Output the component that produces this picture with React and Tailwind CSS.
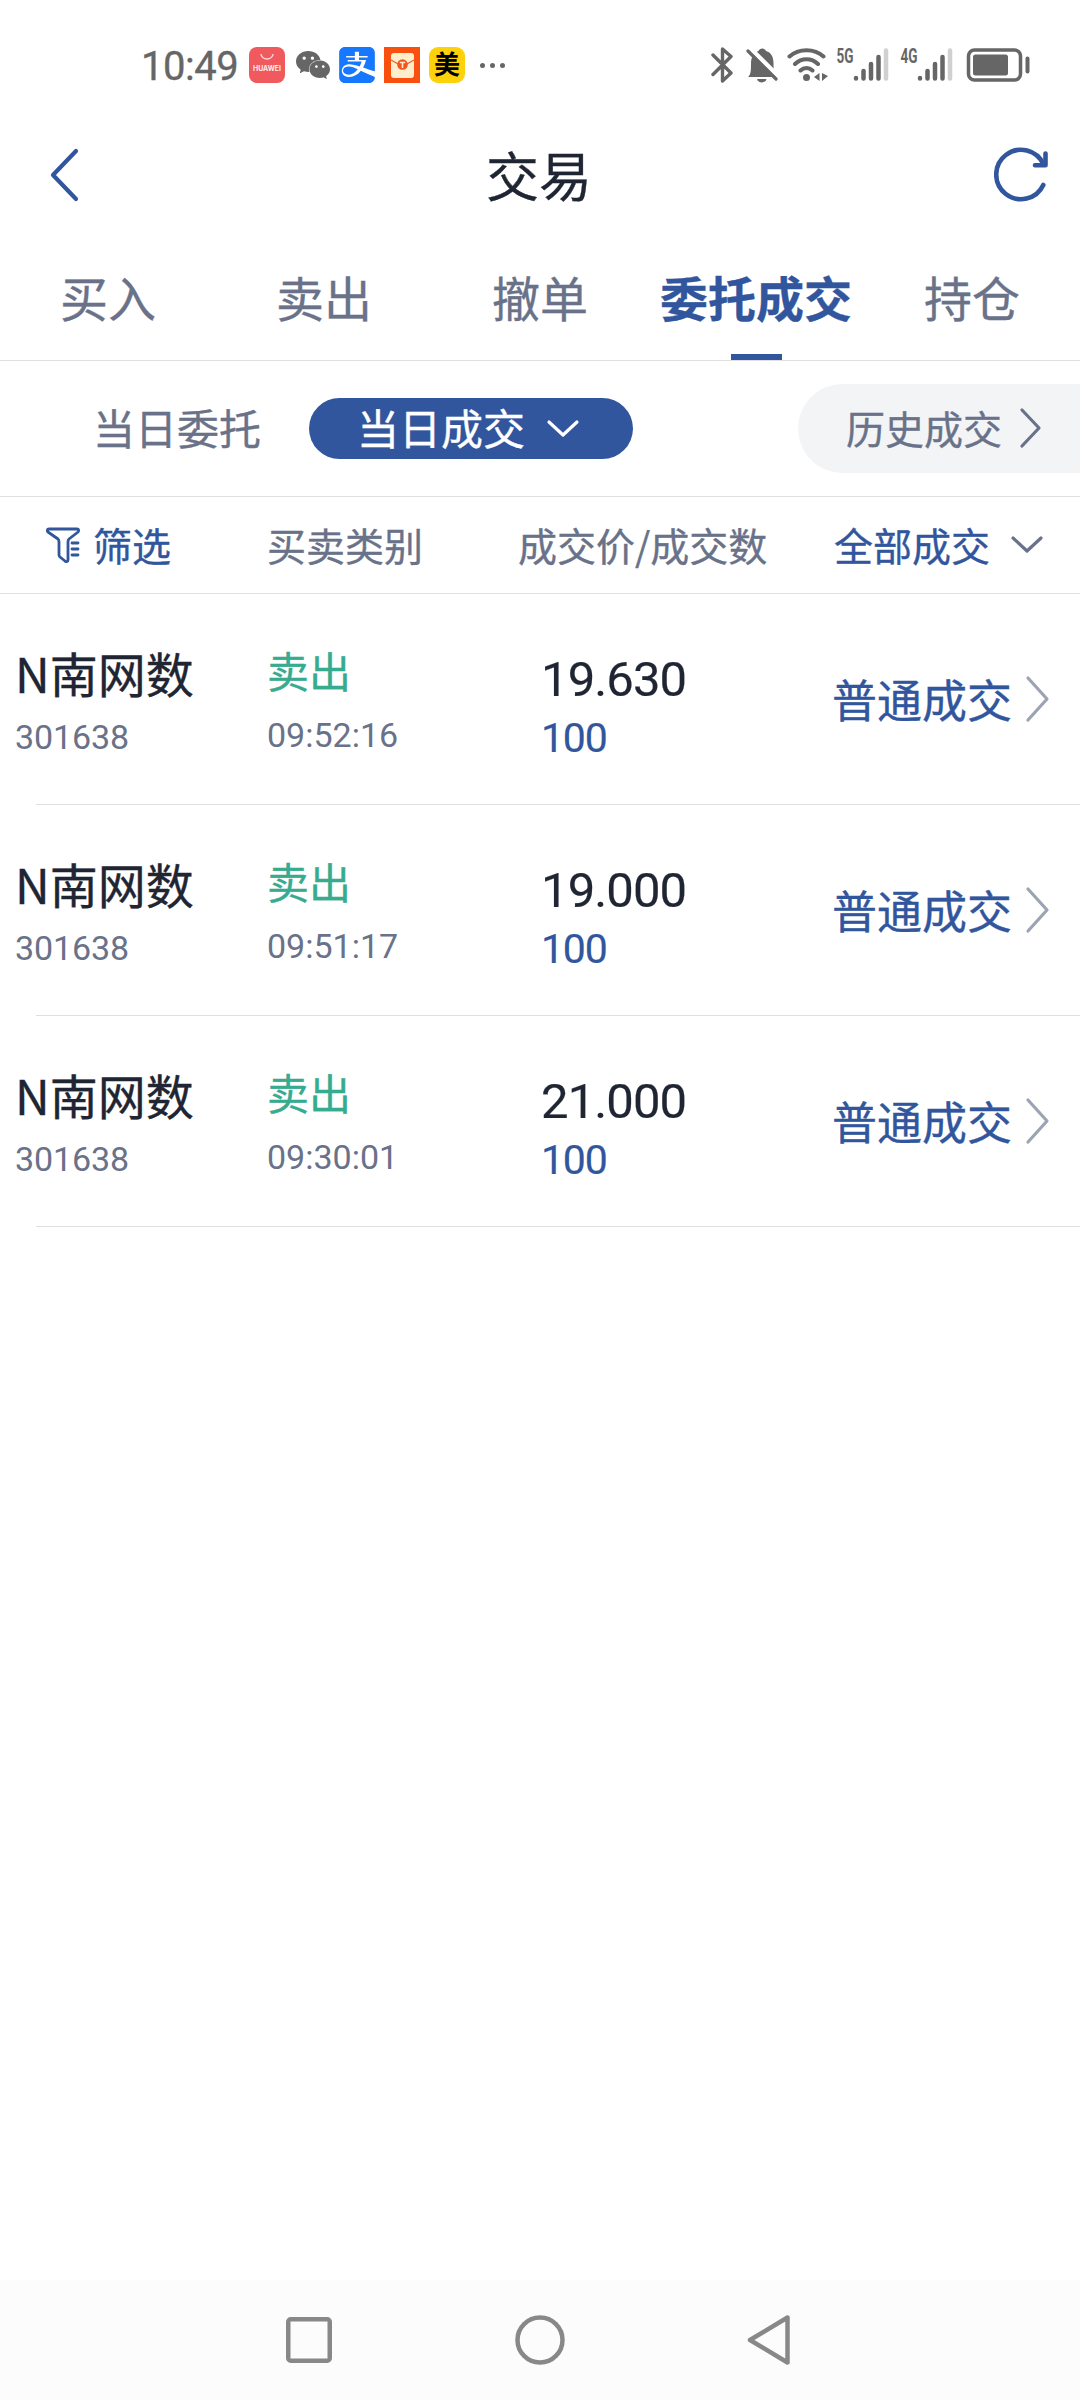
import { SiAlipay, SiWechat } from "react-icons/si";

const Chevron = ({ d, w, h, sw = 3.2, className }) => (
  <svg width={w} height={h} viewBox={`0 0 ${w} ${h}`} fill="none" stroke="currentColor" strokeWidth={sw} className={className}>
    <path d={d} strokeLinecap="round" strokeLinejoin="round" />
  </svg>
);

function AppIcons() {
  return (
    <div className="flex items-center [-webkit-text-stroke:0px]">
      <svg width="36" height="36" viewBox="0 0 36 36">
        <rect width="36" height="36" rx="8" fill="#f0595d" />
        <path d="M12 7a6 5 0 0 0 12 0" fill="none" stroke="#fbd5d3" strokeWidth="1.4" />
        <text x="4" y="24" textLength="28" lengthAdjust="spacingAndGlyphs" fontSize="7" fontWeight="700" fill="#fdeeec" fontFamily="Inter">HUAWEI</text>
      </svg>
      <SiWechat size={34} color="#666" className="ml-[11px]" />
      <SiAlipay size={36} color="#1677ff" className="ml-[9px]" />
      <svg width="36" height="36" viewBox="0 0 36 36" className="ml-[9px]">
        <rect width="36" height="36" fill="#f9500f" />
        <rect x="7" y="6" width="23" height="25" rx="3" fill="#ffeecb" />
        <path d="M7 13l8 4.500M30 13l-8 4.500" stroke="#e8622a" strokeWidth="1.300" />
        <circle cx="18.500" cy="17.500" r="5.300" fill="#f0561d" />
        <path d="M15.800 15.500h5.400M18.500 15.500v5.500" stroke="#ffeecb" strokeWidth="1.600" />
      </svg>
      <div className="ml-[9px] flex h-9 w-9 items-center justify-center rounded-[9px] bg-[#fdd20a] text-[26px] font-bold leading-none text-black">
        <span className="relative -top-[2px]">美</span>
      </div>
      <div className="ml-[15px] flex gap-[5px]">
        <i className="h-[5px] w-[5px] rounded-full bg-[#666]" />
        <i className="h-[5px] w-[5px] rounded-full bg-[#666]" />
        <i className="h-[5px] w-[5px] rounded-full bg-[#666]" />
      </div>
    </div>
  );
}

const Signal = ({ label }) => (
  <svg width="54" height="50" viewBox="0 -7 54 50" className="[-webkit-text-stroke:0px]">
    <text x="0.5" y="15.500" fontSize="20" fontWeight="700" textLength="17" lengthAdjust="spacingAndGlyphs" fill="#666" fontFamily="Roboto">{label}</text>
    <g stroke="#666" strokeWidth="4.500" strokeLinecap="round">
      <path d="M20 31v.5M27.500 24v7.500M35 17v14.500M42.500 10v21.500" />
      <path d="M50 3.500v28" stroke="#d0d0d0" />
    </g>
  </svg>
);

function StatusBar() {
  return (
    <div className="flex h-[130px] items-center justify-between pl-[141px] pr-[50px] text-[#666]">
      <div className="flex items-center">
        <span className='relative top-[2px] w-[108px] whitespace-nowrap font-[Roboto,sans-serif] text-[40px] leading-none tracking-[-0.5px]'>10:49</span>
        <AppIcons />
      </div>
      <div className="flex items-center">
        <svg width="24" height="36" viewBox="0 0 24 36" fill="none" stroke="#666" strokeWidth="3.400" strokeLinecap="round" strokeLinejoin="round">
          <path d="M3 8l18 18-8.500 8V2l8.500 7.500L3 27.500" />
        </svg>
        <svg width="33" height="36" viewBox="0 0 33 36" className="ml-3">
          <path d="M2 30c2.500-2 3-5 3-13C5 9.500 8 5.500 12.500 4c1-3.500 6.500-3.500 7.500 0 5 1.500 7.500 5.500 7.500 12.500 0 8 .5 11.500 2.500 13.500z" fill="#666" />
          <path d="M11 32h9.500c-1 4.500-8.500 4.500-9.500 0z" fill="#666" />
          <path d="M5 2l28 28" stroke="#fff" strokeWidth="4.500" />
          <path d="M2 4l28 28" stroke="#666" strokeWidth="3.200" strokeLinecap="round" />
        </svg>
        <svg width="42" height="36" viewBox="0 0 42 36" className="ml-2" fill="none" stroke="#666" strokeWidth="4" strokeLinecap="round">
          <path d="M2.500 9.500c9-8.500 25-8.500 34 0M8 17c6.500-6.500 16.500-6.500 23 0M13.500 23.500c3.500-3.500 8.500-3.500 12 0" />
          <circle cx="19.500" cy="30.500" r="3.500" fill="#666" stroke="none" />
          <path d="M32.500 26v8L27 30zM35 26v8l6-5z" fill="#666" stroke="none" />
        </svg>
        <div className="ml-[7px]"><Signal label="5G" /></div>
        <div className="ml-[10px]"><Signal label="4G" /></div>
        <svg width="64" height="34" viewBox="0 0 64 34" className="ml-3">
          <rect x="2.500" y="2" width="52" height="30" rx="6" fill="none" stroke="#666" strokeWidth="3.500" />
          <rect x="7" y="6.500" width="35" height="21" rx="2.500" fill="#666" />
          <path d="M61.500 10.500v13" stroke="#666" strokeWidth="4" strokeLinecap="round" />
        </svg>
      </div>
    </div>
  );
}

const tabs = ["买入", "卖出", "撤单", "委托成交", "持仓"];
const trades = [
  { time: "09:52:16", price: "19.630" },
  { time: "09:51:17", price: "19.000" },
  { time: "09:30:01", price: "21.000" },
];

function TradeRow({ time, price }) {
  return (
    <div className="h-[211px]">
      <div className="flex h-[210px] leading-none">
        <div className="w-[251px] pl-[15px] pt-[54px]">
          <div className="whitespace-nowrap text-[48px] text-[#1f2533]">N南网数</div>
          <div className="mt-6 font-[Roboto,sans-serif] text-[34px] tracking-[-0.1px] text-[#697289] [-webkit-text-stroke:0px]">301638</div>
        </div>
        <div className="w-[290px] pl-4 pt-[55px]">
          <div className="text-[42px] text-[#37ab90]">卖出</div>
          <div className="mt-[27px] font-[Roboto,sans-serif] text-[34px] text-[#697289] [-webkit-text-stroke:0px]">{time}</div>
        </div>
        <div className="w-[291px] pt-[61px] font-[Roboto,sans-serif] [-webkit-text-stroke:0.2px]">
          <div className="text-[49px] tracking-[-0.9px] text-[#1f2533]">{price}</div>
          <div className="mt-[14px] text-[41px] tracking-[-1.2px] text-[#31569d]">100</div>
        </div>
        <div className="flex flex-1 items-center text-[#31569d]">
          <span className="relative -top-px text-[45px]">普通成交</span>
          <Chevron w={26} h={48} d="M3 3l19 21L3 45" className="ml-[13px] text-[#9ca3b3]" />
        </div>
      </div>
      <div className="ml-9 h-px bg-[#dfdfdf]" />
    </div>
  );
}

export default function App() {
  return (
    <div className={`flex h-[2400px] w-[1080px] flex-col overflow-hidden bg-white font-["Noto_Sans_CJK_SC",sans-serif] [-webkit-text-stroke:0.35px]`}>
      <StatusBar />
      <header className="flex h-[90px] items-center justify-between pl-[49px] pr-[30px]">
        <Chevron w={32} h={54} sw={4.2} d="M27 3L4 27L27 51" className="text-[#31569d]" />
        <h1 className="relative -top-px ml-[3px] text-[53px] leading-none text-[#1f2533]">交易</h1>
        <svg width="56" height="58" viewBox="0 0 56 58" fill="none" stroke="#31569d" strokeWidth="4.600" strokeLinecap="round" strokeLinejoin="round">
          <path d="M49.300 39A24.700 24.700 0 1 1 49.500 18.500" />
          <path d="M51.500 7.500v11.700H41" />
        </svg>
      </header>
      <nav className="grid h-[140px] grid-cols-5 text-[48px] leading-none text-[#697289]">
        {tabs.map((t, i) => (
          <div key={t} className="flex flex-col items-center justify-between whitespace-nowrap pt-[52px]">
            {i === 3 ? <span className="font-bold text-[#31569d]">{t}</span> : <span>{t}</span>}
            {i === 3 && <i className="h-[6px] w-[51px] bg-[#31569d]" />}
          </div>
        ))}
      </nav>
      <div className="h-px shrink-0 bg-[#dfdfdf]" />
      <div className="flex h-[135px] items-center leading-none">
        <span className="relative -top-[2px] ml-[93px] w-[216px] text-[42px] text-[#697289]">当日委托</span>
        <div className="flex h-[61px] w-[324px] items-center rounded-full bg-[#31569d] pl-[48px] text-[42px] text-white">
          <span className="relative -top-[2px]">当日成交</span>
          <Chevron w={34} h={20} d="M3 3l14 13L31 3" className="ml-[21px]" />
        </div>
        <div className="ml-auto flex h-[89px] w-[282px] items-center rounded-l-full bg-[#f3f4f6] pl-[48px] text-[39px] text-[#697289]">
          <span className="relative -top-px">历史成交</span>
          <Chevron w={24} h={42} d="M3 3l17 18L3 39" className="relative -top-px ml-[17px]" />
        </div>
      </div>
      <div className="h-px shrink-0 bg-[#dfdfdf]" />
      <div className="flex h-24 items-center text-[39px] leading-none text-[#697289]">
        <svg width="36" height="36" viewBox="0 0 36 36" fill="none" stroke="#31569d" strokeWidth="2.800" strokeLinejoin="round" strokeLinecap="round" className="ml-[46px]">
          <path d="M3 2h28c2 0 2 2 1 3l-9 7c-1 1-1 2-1 3v18c0 2-2 2-3 1l-5-4c-1-1-1-1-1-2V15c0-1 0-2-1-3L2 5C1 4 1 2 3 2zM26 16h6M26 22h6M26 28h6" />
        </svg>
        <span className="relative -top-px ml-[11px] w-[174px] text-[#31569d]">筛选</span>
        <span className="relative -top-px w-[251px]">买卖类别</span>
        <span className="relative -top-px w-[316px]">成交价/成交数</span>
        <span className="relative -top-px text-[#31569d]">全部成交</span>
        <Chevron w={34} h={20} d="M3 3l14 13L31 3" className="ml-[20px]" />
      </div>
      <div className="h-px shrink-0 bg-[#dfdfdf]" />
      <main className="flex-1">
        {trades.map((t) => <TradeRow key={t.time} {...t} />)}
      </main>
      <footer className="flex h-[120px] items-center justify-between bg-[#fcfcfc] pl-[285px] pr-[288px]">
        <svg width="48" height="48" viewBox="0 0 48 48" fill="none" stroke="#888" strokeWidth="4.500"><rect x="3.250" y="3.250" width="41.500" height="41.500" rx="2.500" /></svg>
        <svg width="52" height="52" viewBox="0 0 52 52" fill="none" stroke="#888" strokeWidth="4.500"><circle cx="26" cy="26" r="22.500" /></svg>
        <svg width="46" height="52" viewBox="0 0 46 52" fill="none" stroke="#888" strokeWidth="4.500" strokeLinejoin="round"><path d="M41.500 3.500v45L4 26z" /></svg>
      </footer>
    </div>
  );
}
